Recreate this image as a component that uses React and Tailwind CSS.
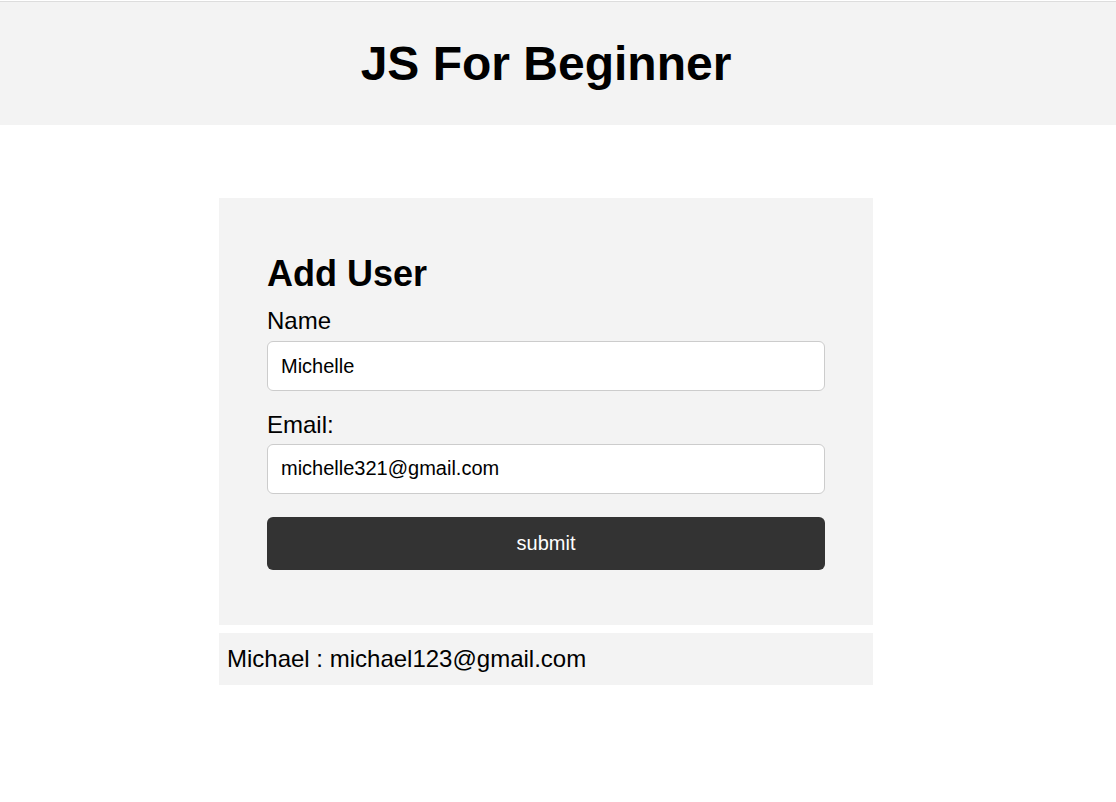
import React, { useState } from 'react';

const App = () => {
  const [name, setName] = useState('Michelle');
  const [email, setEmail] = useState('michelle321@gmail.com');
  const users = [{ name: 'Michael', email: 'michael123@gmail.com' }];

  return (
    <div className="min-h-[802px] bg-white text-black" style={{ fontFamily: '"Liberation Sans", Arial, sans-serif' }}>
      {/* Header */}
      <header className="mt-px border-t border-[#dddddd] bg-[#f3f3f3]">
        <div className="w-[1092px] py-[34px] text-center">
          <h1 className="text-[48px] font-bold leading-[1.15]">JS For Beginner</h1>
        </div>
      </header>

      <div className="w-[1092px]">
        {/* Form card */}
        <form
          className="mx-auto mt-[73px] w-[654px] bg-[#f3f3f3] px-[48px] pt-[55px] pb-[55px]"
          onSubmit={e => e.preventDefault()}
        >
          <h2 className="text-[36px] font-bold leading-[1.15]">Add User</h2>
          <label className="mt-[12px] block text-[24px] leading-[1.15]">Name</label>
          <input
            className="mt-[7px] block h-[50px] w-full rounded-[6px] border border-[#cccccc] bg-white px-[13px] text-[20px] outline-none"
            value={name}
            onChange={e => setName(e.target.value)}
          />
          <label className="mt-[20px] block text-[24px] leading-[1.15]">Email:</label>
          <input
            className="mt-[5px] block h-[50px] w-full rounded-[6px] border border-[#cccccc] bg-white px-[13px] text-[20px] outline-none"
            value={email}
            onChange={e => setEmail(e.target.value)}
          />
          <button
            type="submit"
            className="mt-[23px] block h-[53px] w-full rounded-[6px] bg-[#333333] text-[20px] text-white"
          >
            submit
          </button>
        </form>

        {/* User list */}
        <ul className="mx-auto mt-[8px] w-[654px]">
          {users.map(u => (
            <li key={u.email} className="bg-[#f3f3f3] px-[8px] py-[12.5px] text-[24px] leading-[1.15]">
              {u.name} : {u.email}
            </li>
          ))}
        </ul>
      </div>
    </div>
  );
};

export default App;
